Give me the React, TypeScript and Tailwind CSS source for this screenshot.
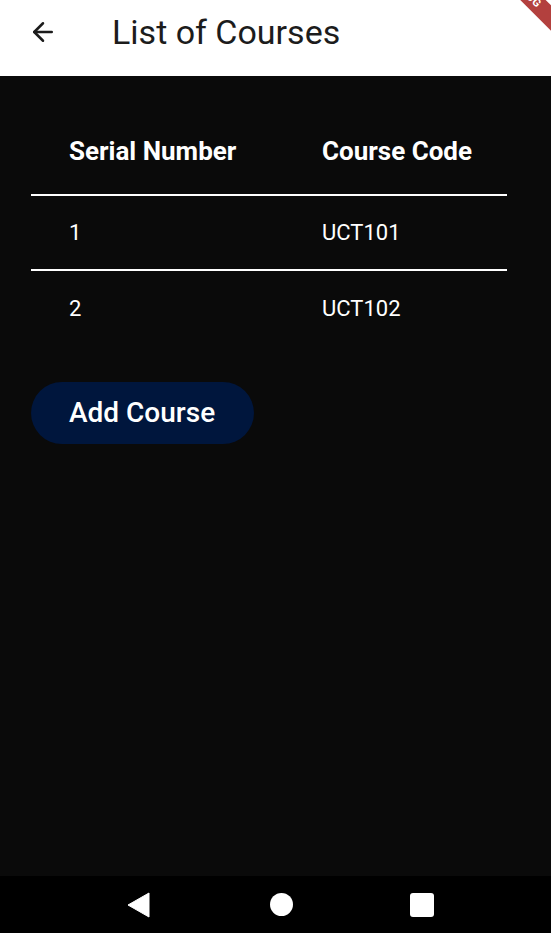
import { ArrowLeft } from "lucide-react"

const courses = [
  { serial: 1, code: "UCT101" },
  { serial: 2, code: "UCT102" },
]

export default function App() {
  return (
    <div className="relative flex h-[933px] w-[551px] flex-col overflow-hidden bg-[#0a0a0a] font-['Roboto',sans-serif]">
      <header className="flex h-[76px] shrink-0 items-center bg-white pb-[12px]">
        <ArrowLeft className="ml-[28px] h-[30px] w-[30px] text-[#1c1c1c]" strokeWidth={2} aria-hidden="true" />
        <h1 className="ml-[54px] text-[34px] leading-none text-[#1c1c1c]">List of Courses</h1>
      </header>

      <main className="flex-1 px-[31px] pt-[30px]">
        <div className="w-[476px]">
          <div className="flex h-[90px] items-center border-b-2 border-white pt-[2px] text-[26px] font-bold text-white">
            <span className="w-[291px] pl-[38px]">Serial Number</span>
            <span>Course Code</span>
          </div>
          {courses.map((course, i) => (
            <div
              key={course.code}
              className={`flex h-[75px] items-center text-[22px] text-white ${i < courses.length - 1 ? "border-b-2 border-white" : ""}`}
            >
              <span className="w-[291px] pl-[38px]">{course.serial}</span>
              <span>{course.code}</span>
            </div>
          ))}
        </div>

        <button className="mt-[36px] flex h-[62px] w-[223px] items-center rounded-full bg-[#00163d] pl-[38px] text-[28px] font-medium text-white">
          Add Course
        </button>
      </main>

      <nav className="flex h-[57px] shrink-0 items-center bg-black">
        <svg className="ml-[127px]" width="23" height="26" viewBox="0 0 23 26" aria-hidden="true">
          <path d="M22 1 L22 25 L1 13 Z" fill="white" strokeLinejoin="round" stroke="white" strokeWidth="1" />
        </svg>
        <span className="ml-[120px] h-[23px] w-[23px] rounded-full bg-white" />
        <span className="ml-[117px] h-[24px] w-[24px] rounded-[3px] bg-white" />
      </nav>

      <div className="absolute right-[-40px] top-[-16px] w-[130px] rotate-45 bg-[#b3403e] py-[2px] text-center text-[11px] font-bold leading-tight tracking-wide text-white">
        DEBUG
      </div>
    </div>
  )
}
